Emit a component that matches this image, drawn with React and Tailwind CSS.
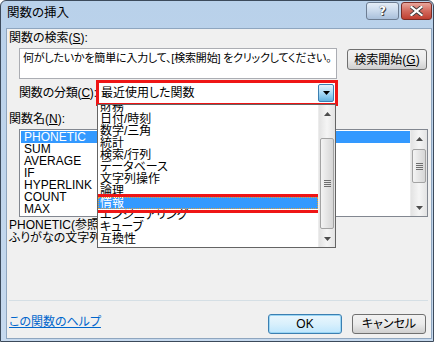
import React from 'react';

const categories = ['財務', '日付/時刻', '数学/三角', '統計', '検索/行列', 'データベース', '文字列操作', '論理', '情報', 'エンジニアリング', 'キューブ', '互換性'];
const functions = ['PHONETIC', 'SUM', 'AVERAGE', 'IF', 'HYPERLINK', 'COUNT', 'MAX'];

const Arrow = ({ up }) => (
  <svg width="7" height="4" viewBox="0 0 7 4">
    {up ? <path d="M3.5 0 L7 4 L0 4 Z" fill="#4d4d4d" /> : <path d="M0 0 L7 0 L3.5 4 Z" fill="#4d4d4d" />}
  </svg>
);

// windows 7 style vertical scrollbar
const ScrollBar = ({ thumbTop, thumbHeight }) => (
  <div className="w-[17px] h-full flex flex-col bg-gradient-to-r from-[#e3e3e3] via-[#f5f5f5] to-[#e3e3e3] border-l border-[#ececec]">
    <div className="h-[17px] flex items-center justify-center shrink-0">
      <Arrow up />
    </div>
    <div className="flex-1 px-[1px]">
      <div
        className="w-full rounded-[2px] border border-[#a3a3a3] bg-gradient-to-r from-[#f4f4f4] to-[#d6d6d6] flex flex-col items-center justify-center gap-[1px]"
        style={{ marginTop: thumbTop, height: thumbHeight }}
      >
        <div className="w-[7px] h-[1px] bg-[#6e6e6e]" />
        <div className="w-[7px] h-[1px] bg-[#6e6e6e]" />
        <div className="w-[7px] h-[1px] bg-[#6e6e6e]" />
        <div className="w-[7px] h-[1px] bg-[#6e6e6e]" />
      </div>
    </div>
    <div className="h-[17px] flex items-center justify-center shrink-0">
      <Arrow />
    </div>
  </div>
);

const Mn = ({ children }) => <span className="underline underline-offset-[1px]">{children}</span>;

export default function App() {
  return (
    <div className="w-[436px] h-[342px] bg-white overflow-hidden font-['Liberation_Sans','Noto_Sans_CJK_JP',sans-serif] [font-feature-settings:'palt'] text-[12px] text-black">
      {/* window frame */}
      <div className="w-[434px] h-[342px] flex flex-col rounded-t-[6px] border border-[#3c4a5b] bg-gradient-to-b from-[#b9d1ea] to-[#c6d9ee]">
        {/* title bar */}
        <div className="h-[27px] flex items-start justify-between pl-[6px] pr-[1px] shrink-0">
          <div className="pt-[4px] leading-[16px] text-[12.5px]">関数の挿入</div>
          <div className="flex gap-[2px] pt-[1px]">
            <div className="w-[33px] h-[18px] rounded-[3px] border border-[#6d7d92] bg-gradient-to-b from-[#e4edf7] via-[#c9d9ec] to-[#a9c0db] flex items-center justify-center">
              <span className="font-['DejaVu_Sans',sans-serif] font-bold text-[12px] leading-none text-white [text-shadow:0_0_1px_#333,1px_1px_0_#444]">?</span>
            </div>
            <div className="w-[31px] h-[18px] rounded-[3px] border border-[#7a2c25] bg-gradient-to-b from-[#e8a69c] via-[#d2685c] to-[#bf3e30] flex items-center justify-center">
              <svg width="13" height="10" viewBox="0 0 13 10">
                <path d="M1.5 1 L11.5 9 M11.5 1 L1.5 9" stroke="#3a3a3a" strokeWidth="4" strokeLinecap="square" />
                <path d="M1.5 1 L11.5 9 M11.5 1 L1.5 9" stroke="#ffffff" strokeWidth="2.2" strokeLinecap="square" />
              </svg>
            </div>
          </div>
        </div>

        {/* client area */}
        <div className="relative flex-1 ml-[5px] mr-[1px] mb-[2px] bg-[#f0f0f0] border border-[#8fa6bf] pl-[1px] flex flex-col">
          <div className="mt-[1px] ml-[1px] h-[16px] leading-[16px]">関数の検索(<Mn>S</Mn>):</div>

          <div className="mt-[2px] flex items-start">
            <div className="ml-[11px] w-[318px] h-[31px] bg-white border border-[#abadb3] pl-[3px] pt-[2px] leading-[14px] text-[11px] tracking-[-0.2px] whitespace-nowrap overflow-hidden">
              何がしたいかを簡単に入力して、[検索開始] をクリックしてください。
            </div>
            <div className="ml-[10px] mt-[1px] w-[80px] h-[21px] rounded-[3px] border border-[#707070] bg-gradient-to-b from-[#f2f2f2] via-[#ebebeb] to-[#cfcfcf] flex items-center justify-center leading-none">
              検索開始(<Mn>G</Mn>)
            </div>
          </div>

          <div className="mt-[1px] flex items-center h-[26px]">
            <div className="ml-[11px] w-[77px] leading-[14px] whitespace-nowrap tracking-[-0.2px]">関数の分類(<Mn>C</Mn>):</div>
            <div className="w-[242px] h-[26px] border-[3px] border-[#ef1515] bg-white flex items-center justify-between pl-[2px] pr-[1px]">
              <span className="leading-[14px]">最近使用した関数</span>
              <div className="w-[16px] h-[18px] rounded-[2px] border border-[#3c7fb1] bg-gradient-to-b from-[#e5f4fc] via-[#a9dbf6] to-[#63b2e0] flex items-center justify-center">
                <svg width="7" height="4" viewBox="0 0 7 4"><path d="M0 0 L7 0 L3.5 4 Z" fill="#000" /></svg>
              </div>
            </div>
          </div>

          <div className="mt-[6px] ml-[1px] h-[14px] leading-[14px]">関数名(<Mn>N</Mn>):</div>

          <div className="mt-[3px] ml-[11px] w-[409px] h-[88px] bg-white border border-[#828790] flex">
            <div className="flex-1 pt-[1px] pl-[1px] overflow-hidden">
              {functions.map((f, i) => (
                <div
                  key={f}
                  className={`h-[12px] leading-[12px] pl-[3px] font-['Liberation_Sans',sans-serif] text-[12px] ${i === 0 ? 'bg-[#3399ff] text-white' : ''}`}
                >
                  {f}
                </div>
              ))}
            </div>
            <ScrollBar thumbTop={2} thumbHeight={34} />
          </div>

          <div className="mt-[2px] ml-[1px] leading-[13px] whitespace-nowrap">
            <div>PHONETIC(参照)</div>
            <div>ふりがなの文字列を取り出します。</div>
          </div>

          <div className="mt-[55px] ml-[1px] w-[419px] h-[1px] bg-[#d5dfe5]" />

          <div className="mt-[13px] flex items-start">
            <a className="ml-[1px] mt-[1px] leading-[14px] text-[#0066cc] underline underline-offset-[1px]">この関数のヘルプ</a>
            <div className="flex-1" />
            <div className="w-[74px] h-[20px] rounded-[3px] border border-[#3c7fb1] bg-gradient-to-b from-[#eaf6fd] via-[#d9f0fc] to-[#bee6fd] shadow-[inset_0_0_0_1px_#9ad6f5] flex items-center justify-center leading-none font-['Liberation_Sans',sans-serif]">
              OK
            </div>
            <div className="ml-[10px] mr-[5px] w-[74px] h-[20px] rounded-[3px] border border-[#707070] bg-gradient-to-b from-[#f2f2f2] via-[#ebebeb] to-[#cfcfcf] flex items-center justify-center leading-none">
              キャンセル
            </div>
          </div>

          {/* dropdown popup of the category combobox */}
          <div className="absolute left-[90px] top-[75px] w-[239px] h-[144px] bg-white border border-[#646464] flex">
            <div className="flex-1 overflow-hidden">
              <div className="-mt-[4px]">
                {categories.map((c) =>
                  c === '情報' ? (
                    <div key={c} className="relative h-[12px] leading-[12px] pl-[2px] bg-[#3399ff] text-white outline-1 outline-dotted outline-[#e0a040] -outline-offset-1">
                      {c}
                      <div className="absolute -left-[3px] -right-[3px] -top-[3px] -bottom-[4px] border-[3px] border-[#ef1515]" />
                    </div>
                  ) : (
                    <div key={c} className="h-[12px] leading-[12px] pl-[2px] whitespace-nowrap">
                      {c}
                    </div>
                  )
                )}
              </div>
            </div>
            <ScrollBar thumbTop={16} thumbHeight={91} />
          </div>
        </div>
      </div>
    </div>
  );
}
